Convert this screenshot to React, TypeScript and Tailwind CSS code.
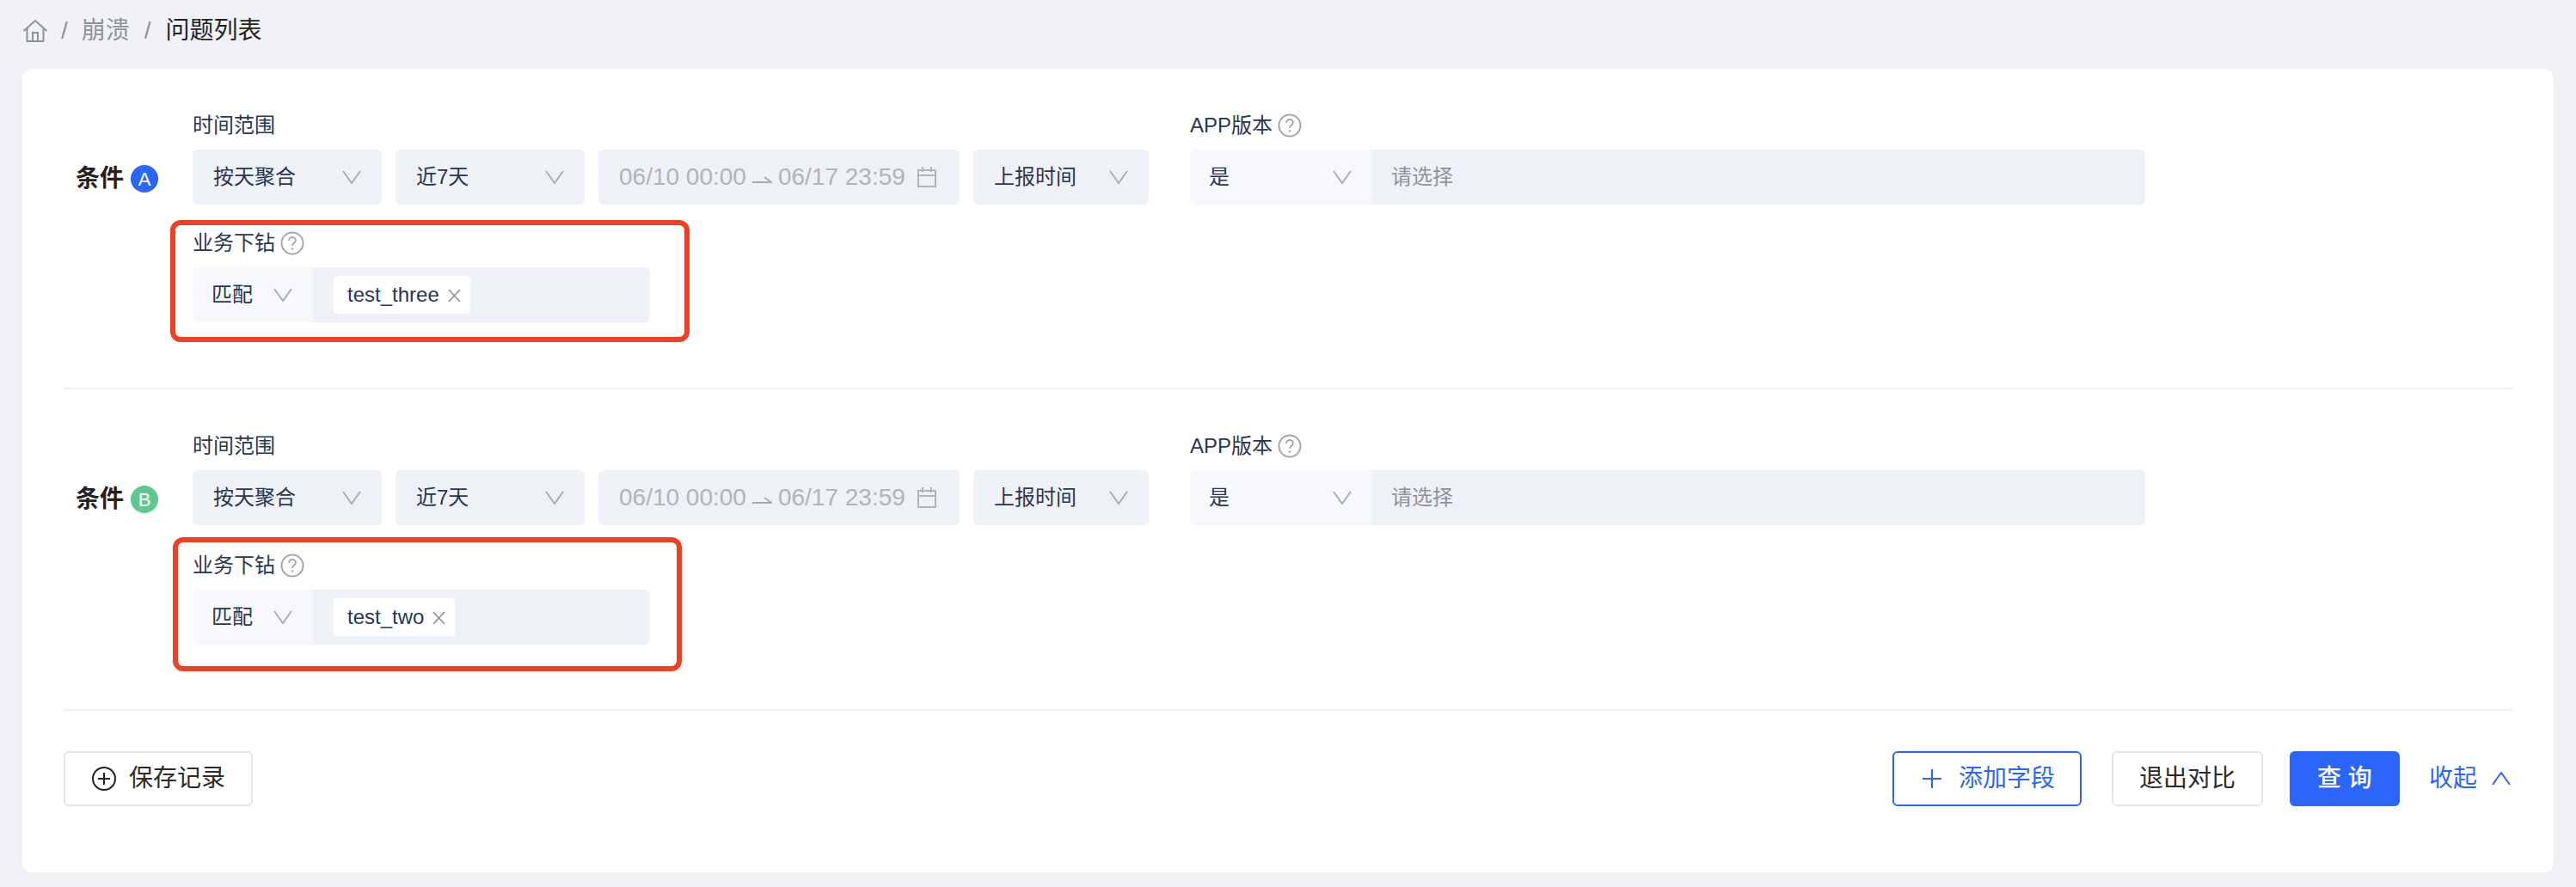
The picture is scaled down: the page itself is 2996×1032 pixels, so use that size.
const FONT = 'font-["Liberation_Sans","Noto_Sans_CJK_SC",sans-serif]';

function Chevron({ up = false, className = 'text-[#a9adb5]' }: { up?: boolean; className?: string }) {
  return (
    <svg width="22" height="16" viewBox="0 0 22 16" fill="none" className={className}>
      <path d={up ? 'M1 15L11 1L21 15' : 'M1 1L11 15L21 1'} stroke="currentColor" strokeWidth="2" />
    </svg>
  );
}

function Help() {
  return (
    <svg width="28" height="28" viewBox="0 0 28 28" fill="none" className="ml-[6px] text-[#a3a6ab]">
      <circle cx="14" cy="14" r="12.5" stroke="currentColor" strokeWidth="2" />
      <path d="M10 11c0-2.4 1.8-4 4-4s4 1.5 4 3.6c0 3-4 3.2-4 6.4" stroke="currentColor" strokeWidth="1.8" />
      <circle cx="14" cy="20.5" r="1.2" fill="currentColor" />
    </svg>
  );
}

function Label({ text, help = false }: { text: string; help?: boolean }) {
  return (
    <div className="flex items-center h-[36px] mb-[10px] text-[24px] text-[#2a3650]">
      <span>{text}</span>
      {help && <Help />}
    </div>
  );
}

function Select({ text, width, light = false }: { text: string; width: string; light?: boolean }) {
  return (
    <div className={`${width} ${light ? 'bg-[#f6f8fc] rounded-l-[6px] pl-[22px]' : 'bg-[#eef1f6] rounded-[6px] pl-[24px]'} h-[64px] flex items-center justify-between pr-[24px] text-[24px] text-[#2a3650] shrink-0`}>
      <span>{text}</span>
      <Chevron />
    </div>
  );
}

function DateRange() {
  return (
    <div className="w-[420px] h-[64px] bg-[#eef1f6] rounded-[6px] flex items-center pl-[24px] text-[28px] text-[#b1b4b8] shrink-0">
      <span>06/10 00:00</span>
      <svg width="23" height="14" viewBox="0 0 23 14" fill="none" className="mx-[7px] mt-[4px] text-[#a9acb1]">
        <path d="M0 11H22L14 5" stroke="currentColor" strokeWidth="2" />
      </svg>
      <span>06/17 23:59</span>
      <svg width="22" height="24" viewBox="0 0 22 24" fill="none" className="ml-[14px] text-[#b1b4b8]">
        <rect x="1" y="4" width="20" height="19" stroke="currentColor" strokeWidth="2" />
        <path d="M1 10H21M6 0V6M16 0V6" stroke="currentColor" strokeWidth="2" />
      </svg>
    </div>
  );
}

function Tag({ text }: { text: string }) {
  return (
    <div className="h-[44px] bg-white rounded-[2px] flex items-center pl-[16px] pr-[11px] text-[24px] text-[#2a3650]">
      <span>{text}</span>
      <svg width="15" height="16" viewBox="0 0 15 16" fill="none" className="ml-[10px] mt-[2px] text-[#8d9096]">
        <path d="M1 1L14 15M14 1L1 15" stroke="currentColor" strokeWidth="1.6" />
      </svg>
    </div>
  );
}

function Condition({ letter, badge, tag, box, drillTop }: { letter: string; badge: string; tag: string; box: string; drillTop: string }) {
  return (
    <div className="flex pl-[14px]">
      <div className="w-[136px] h-[110px] shrink-0 flex items-end pb-[14px]">
        <span className="text-[28px] font-bold text-[#222] leading-[32px]">条件</span>
        <span className={`${badge} ml-[8px] w-[32px] h-[32px] rounded-full text-white text-[22px] flex items-center justify-center`}>{letter}</span>
      </div>
      <div>
        <div className="flex">
          <div>
            <Label text="时间范围" />
            <div className="flex gap-[16px]">
              <Select text="按天聚合" width="w-[220px]" />
              <Select text="近7天" width="w-[220px]" />
              <DateRange />
              <Select text="上报时间" width="w-[204px]" />
            </div>
          </div>
          <div className="ml-[48px]">
            <Label text="APP版本" help />
            <div className="flex">
              <Select text="是" width="w-[212px]" light />
              <div className="w-[899px] h-[64px] bg-[#eef1f6] rounded-r-[6px] flex items-center pl-[22px] text-[24px] text-[#8d929b]">请选择</div>
            </div>
          </div>
        </div>
        <div className={`${drillTop} relative w-[532px]`}>
          <Label text="业务下钻" help />
          <div className="flex">
            <Select text="匹配" width="w-[140px]" light />
            <div className="flex-1 h-[64px] bg-[#eef1f6] rounded-r-[6px] flex items-center pl-[24px]">
              <Tag text={tag} />
            </div>
          </div>
          <div className={`${box} absolute border-[6px] border-[#ee4025] rounded-[12px]`} />
        </div>
      </div>
    </div>
  );
}

function Home() {
  return (
    <svg width="30" height="28" viewBox="0 0 30 28" fill="none" className="text-[#8f9399]">
      <path d="M1.5 14L15 2L28.5 14M5.5 11V26H24.5V11M12 26V16H18V26" stroke="currentColor" strokeWidth="2" />
    </svg>
  );
}

export default function App() {
  return (
    <div className={`${FONT} w-[2996px] h-[1032px] bg-[#f0f2f6] flex flex-col px-[26px]`}>
      <div className="h-[80px] shrink-0 flex items-center pb-[8px] text-[28px]">
        <Home />
        <span className="ml-[15px] mr-[16px] text-[#8f9399]">/</span>
        <span className="text-[#8f9399]">崩溃</span>
        <span className="ml-[17px] mr-[17px] text-[#8f9399]">/</span>
        <span className="text-[#222]">问题列表</span>
      </div>

      <div className="w-[2944px] h-[935px] bg-white rounded-[12px] px-[48px] pt-[48px]">
        <Condition letter="A" badge="bg-[#2b65f9]" tag="test_three" drillTop="mt-[27px]" box="-left-[26px] -top-[9px] w-[604px] h-[142px]" />
        <div className="h-[2px] bg-[#eef0f3] mt-[76px] mb-[48px]" />
        <Condition letter="B" badge="bg-[#5ec88f]" tag="test_two" drillTop="mt-[29px]" box="-left-[23px] -top-[15px] w-[592px] h-[156px]" />
        <div className="h-[2px] bg-[#eef0f3] mt-[75px] mb-[47px]" />

        <div className="flex justify-between items-center">
          <button className="w-[220px] h-[64px] border-2 border-[#dfe3ed] rounded-[6px] flex items-center pl-[31px] text-[28px] text-[#2b2b2b]">
            <svg width="28" height="28" viewBox="0 0 28 28" fill="none" className="mr-[15px]">
              <circle cx="14" cy="14" r="13" stroke="#222" strokeWidth="2" />
              <path d="M14 7V21M7 14H21" stroke="#222" strokeWidth="2" />
            </svg>
            保存记录
          </button>

          <div className="flex items-center">
            <button className="w-[220px] h-[64px] border-2 border-[#2b65f9] rounded-[6px] flex items-center pl-[33px] text-[28px] text-[#2b65f9]">
              <svg width="22" height="22" viewBox="0 0 22 22" fill="none" className="mr-[20px]">
                <path d="M11 0V22M0 11H22" stroke="currentColor" strokeWidth="2" />
              </svg>
              添加字段
            </button>
            <button className="ml-[35px] w-[176px] h-[64px] border-2 border-[#dfe3ed] rounded-[6px] text-[28px] text-[#2b2b2b]">退出对比</button>
            <button className="ml-[31px] w-[128px] h-[64px] bg-[#2b65f9] rounded-[6px] text-[28px] text-white font-medium">查 询</button>
            <span className="ml-[34px] text-[28px] text-[#2b65f9]">收起</span>
            <span className="ml-[17px] mr-[2px]">
              <Chevron up className="text-[#2b65f9]" />
            </span>
          </div>
        </div>
      </div>
    </div>
  );
}
